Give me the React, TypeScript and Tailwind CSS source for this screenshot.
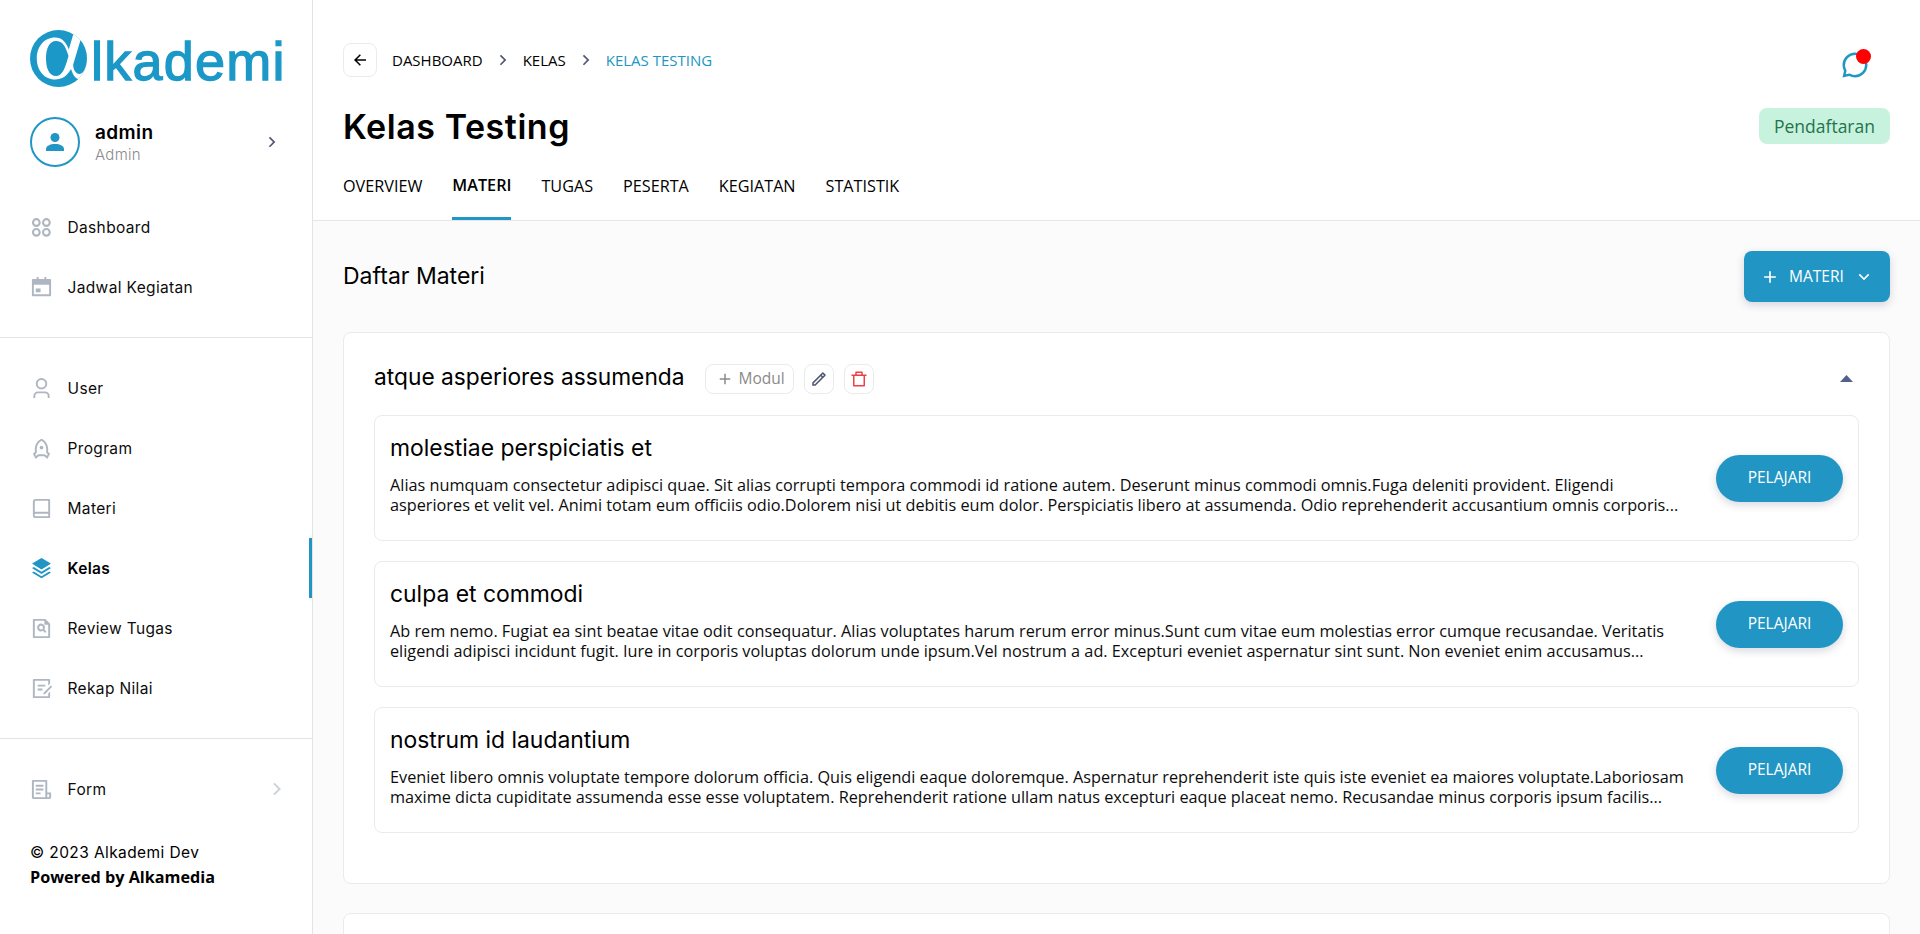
import type { ReactNode } from "react";

const INTER = "font-['Inter',sans-serif]";

function Logo() {
  return (
    <svg width="265" height="72" viewBox="0 0 265 72" className="block overflow-visible">
      <defs>
        <clipPath id="disc">
          <circle cx="28.5" cy="28.5" r="28.5" />
        </clipPath>
      </defs>
      <g clipPath="url(#disc)">
        <rect width="57" height="57" fill="#1b98c7" />
        <path
          fillRule="evenodd"
          fill="#fff"
          d="M25 7.5C14 7.5 6.8 17 6.8 28.5S14 49.5 25 49.5C32 49.5 37 46 41 39C42.500 44 45 48.500 48.500 49L50 49.500L60 42V0H44.500L38.800 19.500C36 12 32 7.500 25 7.500ZM26 11C32.500 11 35.500 16 38.500 26C35 39 32 46 26 46C19 46 16 38 16 28.500S19 11 26 11Z"
        />
        <path fill="#1b98c7" d="M50.500 10C55 15 57.200 21 57.200 28.500C57.200 34 55.500 38.500 53.500 41.500C51 45 47 44.500 44.800 41C43.600 39 43.200 37 43.200 34.500Z" />
      </g>
      <text
        x="61"
        y="50"
        fill="#1b98c7"
        stroke="#1b98c7"
        strokeWidth="1.3"
        fontSize="54"
        fontFamily="'Liberation Sans', Arial, sans-serif"
        textLength="193.5"
        lengthAdjust="spacing"
      >
        lkademi
      </text>
    </svg>
  );
}

function Icon({ children, size = 24, className = "" }: { children: ReactNode; size?: number; className?: string }) {
  return (
    <svg width={size} height={size} viewBox="0 0 24 24" fill="currentColor" className={`block shrink-0 ${className}`}>
      {children}
    </svg>
  );
}

const stroke = { fill: "none", stroke: "currentColor", strokeWidth: 2.2 } as const;

const icons: Record<string, ReactNode> = {
  Dashboard: (
    <g {...stroke}>
      <circle cx="6.6" cy="6.8" r="3.5" />
      <circle cx="17.1" cy="6.8" r="3.5" />
      <circle cx="6.6" cy="17" r="3.5" />
      <circle cx="17.1" cy="17" r="3.5" />
    </g>
  ),
  "Jadwal Kegiatan": (
    <path
      fillRule="evenodd"
      d="M7 1h2v2h6V1h2v2h4a1 1 0 0 1 1 1v16a1 1 0 0 1-1 1H3a1 1 0 0 1-1-1V4a1 1 0 0 1 1-1h4V1zM4 9v10h16V9H4zm2 4h5v4H6v-4z"
    />
  ),
  User: (
    <path d="M12 1a6 6 0 1 0 6 6 6 6 0 0 0-6-6zm0 10a4 4 0 1 1 4-4 4 4 0 0 1-4 4zm8.500 11v-2a5 5 0 0 0-5-5h-7a5 5 0 0 0-5 5v2h2v-2a3 3 0 0 1 3-3h7a3 3 0 0 1 3 3v2z" />
  ),
  Program: (
    <path d="M5 13c0-5.088 2.903-9.436 7-11.182C16.097 3.564 19 7.912 19 13c0 .823-.076 1.626-.22 2.403l1.940 1.832a.5.5 0 0 1 .095.603l-2.495 4.575a.5.5 0 0 1-.793.114l-2.234-2.234a1 1 0 0 0-.707-.293H9.414a1 1 0 0 0-.707.293l-2.234 2.234a.5.5 0 0 1-.793-.114l-2.495-4.575a.5.5 0 0 1 .095-.603l1.940-1.832C5.077 14.626 5 13.823 5 13zm1.476 6.696.817-.817A3 3 0 0 1 9.414 18h5.172a3 3 0 0 1 2.121.879l.817.817.982-1.800-1.100-1.040a2 2 0 0 1-.593-1.820c.124-.664.187-1.345.187-2.036 0-3.870-1.995-7.300-5-8.960C8.995 5.700 7 9.130 7 13c0 .691.063 1.372.187 2.037a2 2 0 0 1-.593 1.820l-1.100 1.039.982 1.800zM12 13a2 2 0 1 1 0-4 2 2 0 0 1 0 4z" />
  ),
  Materi: (
    <path d="M20 22H6a3 3 0 0 1-3-3V5a3 3 0 0 1 3-3h14a1 1 0 0 1 1 1v18a1 1 0 0 1-1 1zm-1-2v-2.500H6a1.250 1.250 0 0 0 0 2.500h13zM5 15.700c.3-.130.650-.2 1-.2h13V4H6a1 1 0 0 0-1 1v10.700z" />
  ),
  Kelas: (
    <path d="m20.083 10.500 1.202.721a.5.5 0 0 1 0 .858L12 17.650l-9.285-5.571a.5.5 0 0 1 0-.858l1.202-.721L12 15.350l8.083-4.850zm0 4.700 1.202.721a.5.5 0 0 1 0 .858l-8.770 5.262a1 1 0 0 1-1.030 0l-8.770-5.262a.5.5 0 0 1 0-.858l1.202-.721L12 20.050l8.083-4.850zM12.514 1.309l8.771 5.262a.5.5 0 0 1 0 .858L12 13 2.715 7.429a.5.5 0 0 1 0-.858l8.770-5.262a1 1 0 0 1 1.030 0z" />
  ),
  "Review Tugas": (
    <path d="M15 4H5v16h14V8h-4V4zM3 2.992C3 2.444 3.447 2 3.999 2H16l5 5v13.993A1 1 0 0 1 20.007 22H3.993A1 1 0 0 1 3 21.008V2.992zm10.529 11.454a4.002 4.002 0 0 1-4.860-6.274 4 4 0 0 1 6.274 4.860l2.210 2.210-1.414 1.415-2.210-2.211zm-.618-2.032a2 2 0 1 0-2.828-2.828 2 2 0 0 0 2.828 2.828z" />
  ),
  "Rekap Nilai": (
    <path d="M20 2a1 1 0 0 1 1 1v3.757l-2 2V4H5v16h14v-2.758l2-2V21a1 1 0 0 1-1 1H4a1 1 0 0 1-1-1V3a1 1 0 0 1 1-1h16zm1.778 6.808 1.414 1.414L15.414 18l-1.416-.002.002-1.412 7.778-7.778zM13 12v2H8v-2h5zm3-4v2H8V8h8z" />
  ),
  Form: (
    <path d="M20 22H4a2 2 0 0 1-2-2V3a1 1 0 0 1 1-1h14a1 1 0 0 1 1 1v12h4v5a2 2 0 0 1-2 2zm-2-5v3h2v-3h-2zm-2 3V4H4v16h12zM6 7h8v2H6V7zm0 4h8v2H6v-2zm0 4h5v2H6v-2z" />
  ),
};

function Chevron({ className = "", size = 20 }: { className?: string; size?: number }) {
  return (
    <Icon size={size} className={className}>
      <path d="m13.172 12-4.950-4.950 1.414-1.414L16 12l-6.364 6.364-1.414-1.414z" />
    </Icon>
  );
}

function Plus({ size = 20 }: { size?: number }) {
  return (
    <Icon size={size}>
      <path d="M11 11V5h2v6h6v2h-6v6h-2v-6H5v-2z" />
    </Icon>
  );
}

function NavItem({ label, active = false, arrow = false }: { label: string; active?: boolean; arrow?: boolean }) {
  return (
    <a
      className={`flex h-[60px] items-center pl-[30px] ${
        active ? "border-r-3 border-[#2196c5] font-semibold text-black" : "text-[#0c0c0c]"
      }`}
    >
      <Icon size={23} className={active ? "text-[#2196c5]" : "text-[#aeb6c1]"}>
        {icons[label]}
      </Icon>
      <span className="ml-[14.500px] pt-px text-[15.500px] tracking-[0.35px]">{label}</span>
      {arrow && <Chevron size={24} className="mr-[23px] ml-auto text-[#ced2d9]" />}
    </a>
  );
}

function Sidebar() {
  return (
    <aside className={`flex h-full w-[313px] shrink-0 flex-col border-r border-[#e3e3e3] bg-white ${INTER}`}>
      <div className="h-[88px] pt-[30px] pl-[30px]">
        <Logo />
      </div>
      <div className="mt-[29px] flex h-[50px] items-center pl-[30px]">
        <div className="flex size-[50px] items-center justify-center rounded-full border-2 border-[#2196c5] text-[#2196c5]">
          <svg width="18" height="18" viewBox="0 0 18 18" fill="currentColor">
            <circle cx="9" cy="4.500" r="4.500" />
            <path d="M0 18v-2c0-3 4-5 9-5s9 2 9 5v2z" />
          </svg>
        </div>
        <div className="ml-[15px] pt-px">
          <div className="text-[19px] leading-[24px] font-semibold tracking-[0.4px] text-black">admin</div>
          <div className="text-[15px] leading-[20px] font-light tracking-[0.3px] text-[#8a8a8a]">Admin</div>
        </div>
        <Chevron size={20} className="mr-[30px] ml-auto text-[#4f5672]" />
      </div>
      <nav className="mt-[30px] border-b border-[#e3e3e3] pb-5">
        <NavItem label="Dashboard" />
        <NavItem label="Jadwal Kegiatan" />
      </nav>
      <nav className="border-b border-[#e3e3e3] py-5">
        <NavItem label="User" />
        <NavItem label="Program" />
        <NavItem label="Materi" />
        <NavItem label="Kelas" active />
        <NavItem label="Review Tugas" />
        <NavItem label="Rekap Nilai" />
      </nav>
      <nav className="pt-5">
        <NavItem label="Form" arrow />
      </nav>
      <footer className="mt-[21px] pl-[30px] text-[16.200px] leading-[25px] text-black">
        <div className="text-[15.500px] tracking-[0.4px]">© 2023 Alkademi Dev</div>
        <div className="font-['Open_Sans',sans-serif] font-bold">Powered by Alkamedia</div>
      </footer>
    </aside>
  );
}

const tabs = ["OVERVIEW", "MATERI", "TUGAS", "PESERTA", "KEGIATAN", "STATISTIK"];

function Header() {
  return (
    <header className="h-[221px] border-b border-[#e6e6e6] bg-white pr-[30px] pl-[30px]">
      <div className="flex h-[77px] items-end justify-between">
        <div className="flex items-center text-[15px] text-black">
          <button className="flex size-[34px] items-center justify-center rounded-lg border border-[#e9ebec]">
            <Icon size={18}>
              <path d="M7.828 11H20v2H7.828l5.364 5.364-1.414 1.414L4 12l7.778-7.778 1.414 1.414z" />
            </Icon>
          </button>
          <span className="ml-[15px]">DASHBOARD</span>
          <Chevron className="mx-[10px] text-[#4f5672]" />
          <span>KELAS</span>
          <Chevron className="mx-[10px] text-[#4f5672]" />
          <span className="text-[#2196c5]">KELAS TESTING</span>
        </div>
        <div className="relative mr-[20px] -mb-[3px] text-[#2196c5]">
          <Icon size={30}>
            <path d="M7.291 20.824 2 22l1.176-5.291A9.956 9.956 0 0 1 2 12C2 6.477 6.477 2 12 2s10 4.477 10 10-4.477 10-10 10a9.956 9.956 0 0 1-4.709-1.176zm.290-2.113.653.350A7.955 7.955 0 0 0 12 20a8 8 0 1 0-8-8c0 1.334.325 2.618.940 3.766l.349.653-.655 2.947 2.947-.655z" />
          </Icon>
          <span className="absolute -top-px right-[-1px] size-[15px] rounded-full bg-[#ff0000]" />
        </div>
      </div>
      <div className="mt-[29px] flex h-[42px] items-center justify-between">
        <h1 className={`text-[34px] leading-[42px] font-[570] tracking-[0.55px] text-black ${INTER}`}>Kelas Testing</h1>
        <span className="mb-[2px] flex h-9 w-[131px] items-center justify-center rounded-lg bg-[#c6f2de] text-[17.500px] text-[#25724c]">
          Pendaftaran
        </span>
      </div>
      <nav className="flex h-[72px] gap-[30px] text-[16.200px] text-black">
        {tabs.map((tab) => (
          <a
            key={tab}
            className={
              tab === "MATERI"
                ? "border-b-3 border-[#2196c5] pt-[25px] leading-[24px] font-semibold"
                : "pt-[26px] leading-[24px]"
            }
          >
            {tab}
          </a>
        ))}
      </nav>
    </header>
  );
}

const modules = [
  {
    title: "molestiae perspiciatis et",
    lines: [
      "Alias numquam consectetur adipisci quae. Sit alias corrupti tempora commodi id ratione autem. Deserunt minus commodi omnis.Fuga deleniti provident. Eligendi",
      "asperiores et velit vel. Animi totam eum officiis odio.Dolorem nisi ut debitis eum dolor. Perspiciatis libero at assumenda. Odio reprehenderit accusantium omnis corporis...",
    ],
  },
  {
    title: "culpa et commodi",
    lines: [
      "Ab rem nemo. Fugiat ea sint beatae vitae odit consequatur. Alias voluptates harum rerum error minus.Sunt cum vitae eum molestias error cumque recusandae. Veritatis",
      "eligendi adipisci incidunt fugit. Iure in corporis voluptas dolorum unde ipsum.Vel nostrum a ad. Excepturi eveniet aspernatur sint sunt. Non eveniet enim accusamus...",
    ],
  },
  {
    title: "nostrum id laudantium",
    lines: [
      "Eveniet libero omnis voluptate tempore dolorum officia. Quis eligendi eaque doloremque. Aspernatur reprehenderit iste quis iste eveniet ea maiores voluptate.Laboriosam",
      "maxime dicta cupiditate assumenda esse esse voluptatem. Reprehenderit ratione ullam natus excepturi eaque placeat nemo. Recusandae minus corporis ipsum facilis...",
    ],
  },
];

function ModuleCard({ title, lines }: { title: string; lines: string[] }) {
  return (
    <article className="flex h-[126px] items-center justify-between rounded-lg border border-[#e9ebec] px-[15px]">
      <div className="h-full pt-[16px]">
        <h3 className={`text-[22.900px] leading-[32px] text-black ${INTER}`}>{title}</h3>
        <p className="mt-[11px] text-[16.250px] leading-[20px] whitespace-nowrap text-[#0c0c0c]">
          {lines[0]}
          <br />
          {lines[1]}
        </p>
      </div>
      <button className="h-[47px] w-[127px] rounded-full bg-[#2196c5] text-[15.500px] font-medium text-white shadow-[0_3px_8px_rgba(60,60,100,0.2)]">
        PELAJARI
      </button>
    </article>
  );
}

export default function App() {
  return (
    <div className="flex h-[934px] w-full overflow-hidden bg-[#fbfbfb] font-['Open_Sans',sans-serif]">
      <Sidebar />
      <main className="min-w-0 flex-1">
        <Header />
        <div className="px-[30px] pt-[30px]">
          <div className="flex h-[51px] items-center justify-between">
            <h2 className={`text-[23px] text-black ${INTER}`}>Daftar Materi</h2>
            <button className="flex h-[51px] w-[146px] items-center rounded-lg bg-[#2196c5] pl-[16px] text-[15.500px] font-medium text-white shadow-[0_3px_8px_rgba(60,60,100,0.2)]">
              <Plus size={20} />
              <span className="ml-[9px]">MATERI</span>
              <Chevron className="ml-[10px] rotate-90" />
            </button>
          </div>
          <section className="mt-[30px] h-[552px] rounded-lg border border-[#e9ebec] bg-white px-[30px]">
            <div className="flex h-[82px] items-center pt-[10px]">
              <h2 className={`pb-[3px] text-[22.750px] text-black ${INTER}`}>atque asperiores assumenda</h2>
              <button className="ml-[20px] flex h-[30px] w-[89px] items-center rounded-lg border border-[#e9ebec] pl-[10px] text-[15.500px] text-[#8a8a8a]">
                <Plus size={18} />
                <span className="ml-[5px]">Modul</span>
              </button>
              <button className="ml-[10px] flex size-[30px] items-center justify-center rounded-lg border border-[#e9ebec] text-[#4f5672]">
                <Icon size={18}>
                  <path d="m15.728 9.686-1.414-1.414L5 17.586V19h1.414l9.314-9.314zm1.414-1.414 1.414-1.414-1.414-1.414-1.414 1.414 1.414 1.414zM7.242 21H3v-4.243L16.435 3.322a1 1 0 0 1 1.414 0l2.829 2.829a1 1 0 0 1 0 1.414L7.243 21z" />
                </Icon>
              </button>
              <button className="ml-[10px] flex size-[30px] items-center justify-center rounded-lg border border-[#e9ebec] text-[#f03e45]">
                <Icon size={18}>
                  <path d="M17 6h5v2h-2v13a1 1 0 0 1-1 1H5a1 1 0 0 1-1-1V8H2V6h5V3a1 1 0 0 1 1-1h8a1 1 0 0 1 1 1v3zm1 2H6v12h12V8zM9 4v2h6V4H9z" />
                </Icon>
              </button>
              <svg width="13" height="7" viewBox="0 0 13 7" className="mr-[6px] mb-[2px] ml-auto" fill="#53608a">
                <path d="M0 7 6.500 0 13 7z" />
              </svg>
            </div>
            <div className="flex flex-col gap-5">
              {modules.map((m) => (
                <ModuleCard key={m.title} {...m} />
              ))}
            </div>
          </section>
          <section className="mt-[29px] h-[200px] rounded-lg border border-[#e9ebec] bg-white" />
        </div>
      </main>
    </div>
  );
}
